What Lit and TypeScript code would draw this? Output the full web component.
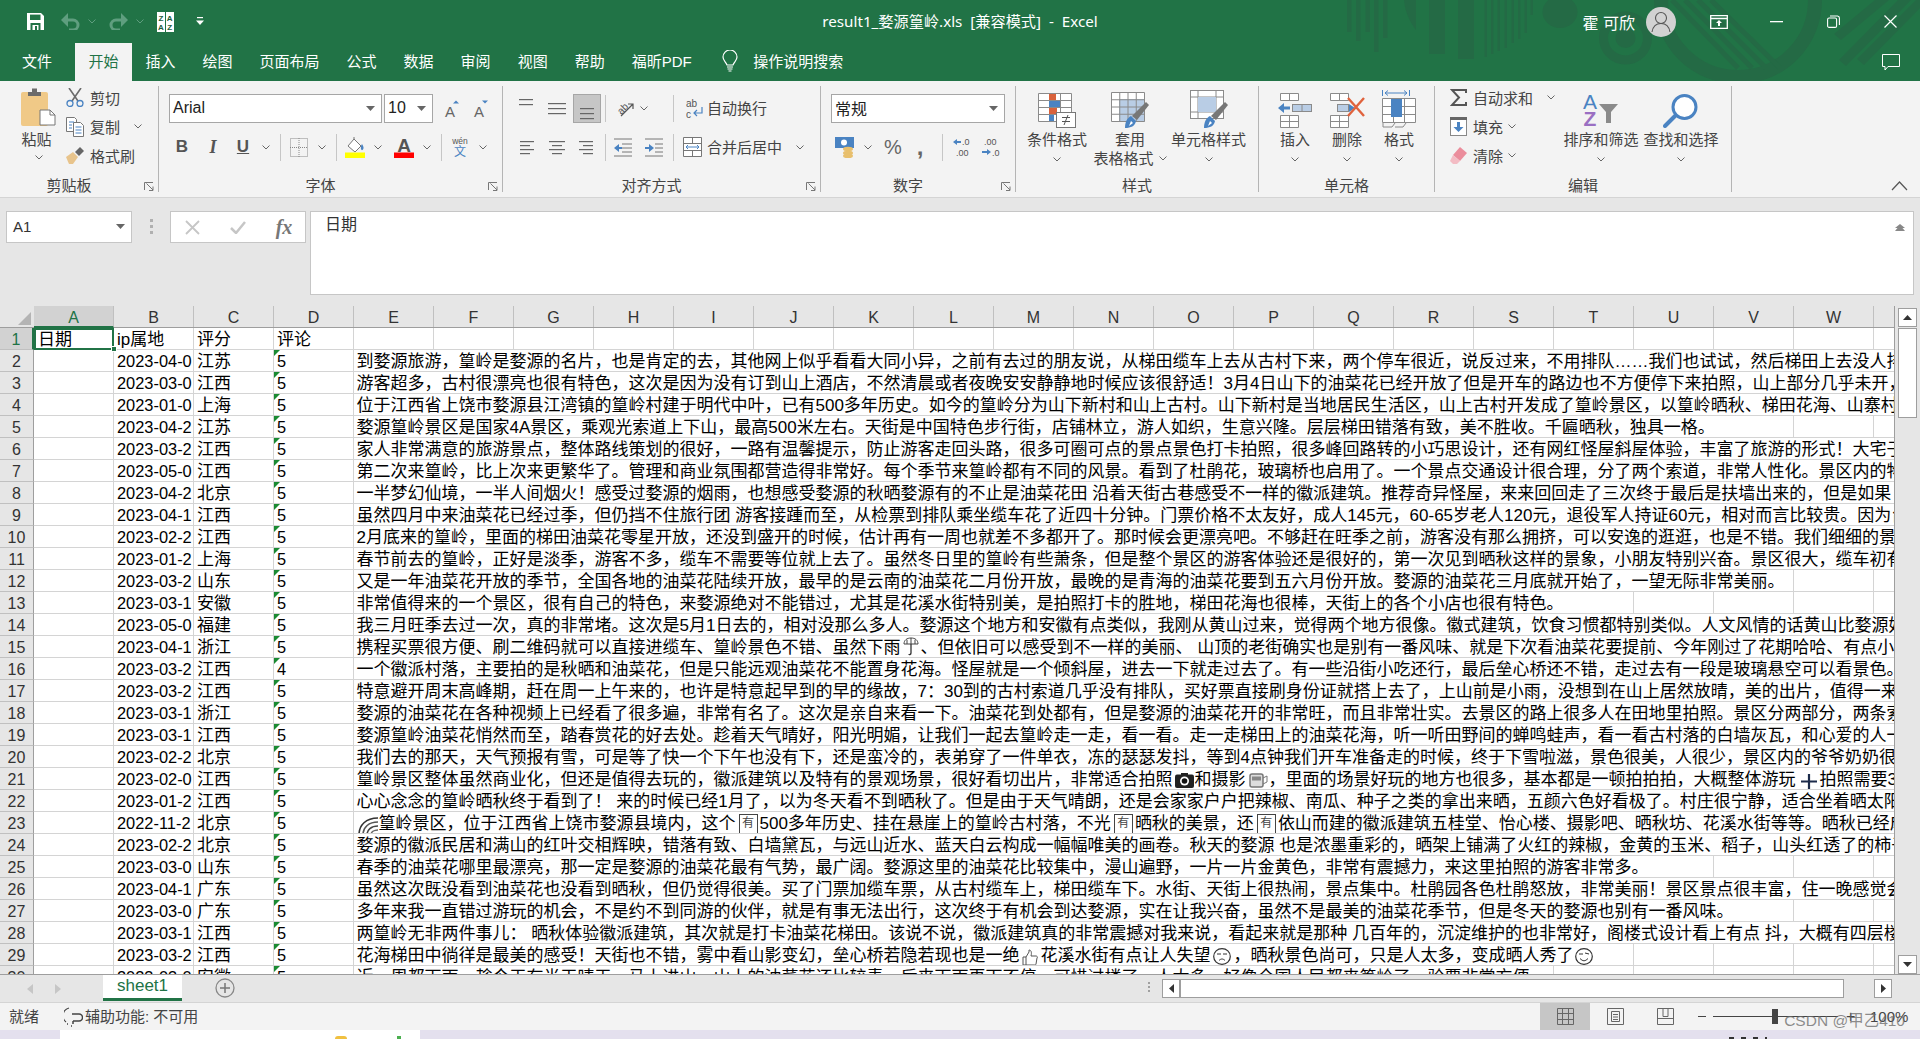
import { LitElement, html, css, svg, TemplateResult } from "lit";
import { customElement } from "lit/decorators.js";

const chev = (c = "#666") => html`<svg class="ic" width="8" height="5" viewBox="0 0 8 5"><polyline points="0.5,0.5 4,4 7.5,0.5" fill="none" stroke="${c}" stroke-width="1"/></svg>`;
const tri = html`<svg class="ic" width="9" height="5" viewBox="0 0 9 5"><path d="M0 0h9L4.5 5z" fill="#666"/></svg>`;
const launcher = html`<svg class="launch" width="10" height="9" viewBox="0 0 10 9"><path d="M.5 8V.5H9M2.5 1.5L9 8M9 4.5V8.5H5" fill="none" stroke="#777"/></svg>`;
const L = (w: number, h: number, ls: number[][], col = "#666") => html`<svg class="ic" width="${w}" height="${h}" viewBox="0 0 ${w} ${h}">${ls.map(l => svg`<rect x="${l[0]}" y="${l[2]}" width="${l[1] - l[0]}" height="1.2" fill="${col}"/>`)}</svg>`;

const saveI = html`<svg class="ic" width="17" height="17" viewBox="0 0 17 17"><path d="M0 0h14l3 3v14H0z" fill="#fff"/><rect x="3" y="1.6" width="10.5" height="5.4" fill="#217346"/><rect x="3.5" y="10" width="10" height="7" fill="#217346"/><rect x="5.5" y="12" width="6" height="5" fill="#fff"/><rect x="8" y="13" width="2" height="4" fill="#217346"/></svg>`;
const undoI = html`<svg class="ic" width="19" height="17" viewBox="0 0 19 17"><path d="M3 7h9a5 5 0 0 1 0 10H8" fill="none" stroke="#5f9e7f" stroke-width="3"/><path d="M0 7l7-7v14z" fill="#5f9e7f"/></svg>`;
const redoI = html`<svg class="ic" width="19" height="17" viewBox="0 0 19 17"><path d="M16 7H7a5 5 0 0 0 0 10h4" fill="none" stroke="#5f9e7f" stroke-width="3"/><path d="M19 7l-7-7v14z" fill="#5f9e7f"/></svg>`;
const sortQ = html`<svg class="ic" width="17" height="20" viewBox="0 0 17 20"><rect width="17" height="20" fill="#fff"/><rect x="8" width="1" height="20" fill="#217346"/><text x="4" y="9" font-size="8" font-family="Liberation Sans" font-weight="700" text-anchor="middle" fill="#1d5c3a">Z</text><text x="12.7" y="9" font-size="8" font-family="Liberation Sans" font-weight="700" text-anchor="middle" fill="#1d5c3a">A</text><text x="4" y="18" font-size="8" font-family="Liberation Sans" font-weight="700" text-anchor="middle" fill="#1d5c3a">A</text><text x="12.7" y="18" font-size="8" font-family="Liberation Sans" font-weight="700" text-anchor="middle" fill="#1d5c3a">Z</text></svg>`;
const qatDrop = html`<svg class="ic" width="8" height="9" viewBox="0 0 8 9"><rect x="1" y="0" width="6" height="1.2" fill="#fff"/><path d="M0 3.5h8L4 8z" fill="#fff"/></svg>`;
const person = html`<svg class="avatar" width="30" height="30" viewBox="0 0 30 30"><circle cx="15" cy="15" r="15" fill="#d2d2d2"/><circle cx="15" cy="11" r="5.5" fill="none" stroke="#555" stroke-width="1.1"/><path d="M6 25c1-6 5-8.5 9-8.5s8 2.5 9 8.5" fill="none" stroke="#555" stroke-width="1.1"/></svg>`;
const ribDisp = html`<svg class="ic" width="18" height="14" viewBox="0 0 18 14"><path d="M.7.7h16.6v12.6H.7zM.7 3.5h16.6" fill="none" stroke="#fff" stroke-width="1.3"/><path d="M9 5l3 3h-2v3H8V8H6z" fill="#fff"/></svg>`;
const minI = html`<svg class="ic" width="13" height="2" viewBox="0 0 13 2"><rect width="13" height="1.3" fill="#fff"/></svg>`;
const restI = html`<svg class="ic" width="13" height="13" viewBox="0 0 13 13"><rect x=".6" y="3" width="9" height="9.4" rx="1.5" fill="none" stroke="#fff" stroke-width="1.1"/><path d="M3 1h7.5A2 2 0 0 1 12.4 3v7" fill="none" stroke="#fff" stroke-width="1.1"/></svg>`;
const closeI = html`<svg class="ic" width="13" height="13" viewBox="0 0 13 13"><path d="M.5.5l12 12M12.5.5l-12 12" stroke="#fff" stroke-width="1.2"/></svg>`;
const bulb = html`<svg class="ic" width="16" height="22" viewBox="0 0 16 22"><path d="M5 15C4 12 1 10.500 1 7a7 7 0 0 1 14 0c0 3.500-3 5-4 8z" fill="none" stroke="#fff" stroke-width="1.2"/><path d="M5 17h6M5.500 19h5M6.500 21h3" stroke="#fff" stroke-width="1.2"/></svg>`;
const comment = html`<svg class="ic" width="18" height="17" viewBox="0 0 18 17"><path d="M.5.500h17v12H6L3 16v-3.500H.5z" fill="none" stroke="#fff"/></svg>`;

const paste = html`<svg class="ic" width="35" height="39" viewBox="0 0 35 39"><rect x="0" y="5" width="27" height="34" rx="2" fill="#f0c987"/><path d="M7 5h4V1.500h5V5h4v4H7z" fill="#6b6b6b"/><path d="M19 23h10l5 5v10H19z" fill="#fff" stroke="#777"/><path d="M29 23v5h5" fill="none" stroke="#777"/></svg>`;
const cut = html`<svg class="ic" width="18" height="19" viewBox="0 0 18 19"><path d="M3 0l9 13M15 0L6 13" stroke="#6b6b6b" stroke-width="1.600"/><circle cx="4" cy="15.500" r="3" fill="none" stroke="#4a83c2" stroke-width="1.300"/><circle cx="14" cy="15.500" r="3" fill="none" stroke="#4a83c2" stroke-width="1.300"/></svg>`;
const copy = html`<svg class="ic" width="18" height="20" viewBox="0 0 18 20"><path d="M.5.500h8l2 2v12H.5z" fill="#fff" stroke="#777"/><path d="M7.500 5.500h7l3 3v11h-10z" fill="#fff" stroke="#777"/><path d="M3 5h5M3 8h3M3 11h3M9.500 10h6M9.500 13h6M9.500 16h6" stroke="#4a83c2"/></svg>`;
const painter = html`<svg class="ic" width="18" height="17" viewBox="0 0 18 17"><path d="M0 10l7-5 5 5-5 7H3z" fill="#e8c48c"/><path d="M9 5l5-5 4 4-5 5z" fill="#666"/></svg>`;
const grow = (up: boolean) => html`<svg class="ic" width="16" height="18" viewBox="0 0 16 18"><text x="6" y="17" font-size="15" font-family="Liberation Sans" text-anchor="middle" fill="#666">A</text><path d="${up ? "M9 3.500l3-3 3 3z" : "M9 .5l3 3 3-3z"}" fill="#4a83c2"/></svg>`;
const borders = html`<svg class="ic" width="18" height="19" viewBox="0 0 18 19"><rect x=".5" y=".5" width="17" height="18" fill="none" stroke="#888" stroke-dasharray="1 1"/><path d="M9 0v19M0 9.500h18" stroke="#888" stroke-dasharray="1 1"/></svg>`;
const fillI = html`<svg class="ic" width="20" height="21" viewBox="0 0 20 21"><path d="M3 9l6-7 7 7-6 6z" fill="#fff" stroke="#777"/><path d="M9 2v-2" stroke="#777"/><path d="M17 7c2 3 2 5 .5 6S15 10 17 7z" fill="#4a83c2"/><rect y="15.500" width="20" height="5.500" fill="#ff0"/></svg>`;
const colorA = html`<svg class="ic" width="20" height="21" viewBox="0 0 20 21"><text x="10" y="14.500" font-size="19" font-family="Liberation Sans" font-weight="700" text-anchor="middle" fill="#555">A</text><rect y="15.500" width="20" height="5.500" fill="#f00"/></svg>`;
const wen = html`<svg class="ic" width="18" height="20" viewBox="0 0 18 20"><text x="9" y="7" font-size="8.500" font-family="Liberation Sans" text-anchor="middle" fill="#555">wén</text><text x="9" y="19" font-size="12" font-family="Noto Sans CJK SC" text-anchor="middle" fill="#4a83c2">文</text></svg>`;

const orient = html`<svg class="ic" width="19" height="19" viewBox="0 0 19 19"><text x="8" y="13" font-size="10" font-family="Liberation Sans" transform="rotate(-45 8 10)" text-anchor="middle" fill="#555">ab</text><path d="M6 17L18 5M13 5h5v5" fill="none" stroke="#555" stroke-width="1.200"/></svg>`;
const wrap = html`<svg class="ic" width="17" height="20" viewBox="0 0 17 20"><text x="0" y="8" font-size="10" font-family="Liberation Sans" fill="#555">ab</text><text x="0" y="19" font-size="10" font-family="Liberation Sans" fill="#555">c</text><path d="M16 8v6h-8M11 11l-3 3 3 3" fill="none" stroke="#4a83c2" stroke-width="1.200"/></svg>`;
const indentL = html`<svg class="ic" width="18" height="19" viewBox="0 0 18 19"><path d="M0 1h18M8 6h10M8 10h10M8 14h10M0 18h18" stroke="#777"/><path d="M0 10l5-4v3h3v2H5v3z" fill="#4a83c2"/></svg>`;
const indentR = html`<svg class="ic" width="18" height="19" viewBox="0 0 18 19"><path d="M0 1h18M10 6h8M10 10h8M10 14h8M0 18h18" stroke="#777"/><path d="M9 10L4 6v3H0v2h4v3z" fill="#4a83c2"/></svg>`;
const merge = html`<svg class="ic" width="19" height="20" viewBox="0 0 19 20"><path d="M.5.500h18v19H.5zM.5 6.500h18M.5 13.500h18M9.500.5v6M9.500 13.500v6" fill="#fff" stroke="#777"/><rect x="1" y="7" width="17" height="6" fill="#fff"/><path d="M3 10h13M5 8l-2 2 2 2M14 8l2 2-2 2" fill="none" stroke="#4a83c2"/></svg>`;
const acct = html`<svg class="ic" width="20" height="21" viewBox="0 0 20 21"><rect y="0" width="19" height="11" fill="#4a83c2"/><circle cx="9" cy="5.500" r="3" fill="#fff"/><ellipse cx="13" cy="12" rx="5" ry="2.200" fill="#e8bf6c"/><ellipse cx="13" cy="16" rx="5" ry="2.200" fill="#e8bf6c"/><ellipse cx="13" cy="19" rx="5" ry="2.200" fill="#e8bf6c"/></svg>`;
const decInc = html`<svg class="ic" width="20" height="20" viewBox="0 0 20 20"><path d="M0 5l4-3v2h4v2H4v2z" fill="#4a83c2"/><text x="9" y="8" font-size="9" font-family="Liberation Sans" fill="#555">.0</text><text x="3" y="19" font-size="9" font-family="Liberation Sans" fill="#555">.00</text></svg>`;
const decDec = html`<svg class="ic" width="20" height="20" viewBox="0 0 20 20"><text x="3" y="8" font-size="9" font-family="Liberation Sans" fill="#555">.00</text><path d="M1 14h5v-2l4 3-4 3v-2H1z" fill="#4a83c2"/><text x="11" y="19" font-size="9" font-family="Liberation Sans" fill="#555">.0</text></svg>`;

const gridLines = (x: number, y: number, w: number, h: number, cx: number, cy: number) => {
  const out = [];
  for (let i = 0; i <= cx; i++) out.push(svg`<path d="M${x + (w * i) / cx} ${y}v${h}" stroke="#8a8a8a"/>`);
  for (let i = 0; i <= cy; i++) out.push(svg`<path d="M${x} ${y + (h * i) / cy}h${w}" stroke="#8a8a8a"/>`);
  return out;
};
const condI = html`<svg class="ic" width="38" height="35" viewBox="0 0 38 35"><rect x=".5" y=".5" width="33" height="28" fill="#fff"/>${gridLines(0.5, 0.5, 33, 28, 3, 4)}<rect x="11" y="1" width="7" height="6" fill="#d9623c"/><rect x="11" y="8" width="11" height="6" fill="#4a83c2"/><rect x="11" y="15" width="8" height="6" fill="#d9623c"/><rect x="11" y="22" width="5" height="6" fill="#4a83c2"/><rect x="18.500" y="19.500" width="19" height="15" fill="#fff" stroke="#777"/><path d="M24 24.500h8M24 28.500h8M30 22l-4 10" stroke="#555"/></svg>`;
const brush = (dx: number, dy: number) => svg`<path transform="translate(${dx} ${dy})" d="M30 0l3 3-12 15-5-4z" fill="#777"/><path transform="translate(${dx} ${dy})" d="M15 14l5 5c-1 5-5 7-11 7 0-6 2-10 6-12z" fill="#4a83c2"/><path transform="translate(${dx} ${dy})" d="M15 19l2 2-4 3z" fill="#fff"/>`;
const tableI = html`<svg class="ic" width="38" height="36" viewBox="0 0 38 36"><rect x=".5" y=".5" width="33" height="29" fill="#fff"/><rect x="8" y="7" width="26" height="23" fill="#b9cde5"/>${gridLines(0.5, 0.5, 33, 29, 4, 4)}${brush(5, 10)}</svg>`;
const cellStyleI = html`<svg class="ic" width="38" height="38" viewBox="0 0 38 38"><rect x=".5" y=".5" width="33" height="28" fill="#fff" stroke="#8a8a8a"/><path d="M8 .5v28M26 .5v28M.5 7h33M.5 22h33" stroke="#8a8a8a"/><rect x="8" y="7" width="18" height="15" fill="#b9cde5"/>${brush(5, 12)}</svg>`;
const insI = html`<svg class="ic" width="34" height="35" viewBox="0 0 34 35"><path d="M2.500.5h18v7h-18zM11.500.5v7M2.500 22.500h18v12h-18zM2.500 28.500h18M11.500 22.500v12" fill="#fff" stroke="#8a8a8a"/><rect x="14.500" y="11.500" width="19" height="7" fill="#b9cde5" stroke="#8a8a8a"/><path d="M24 11.500v7" stroke="#8a8a8a"/><path d="M0 15l6-5v3.500h6v3H6V20z" fill="#4a83c2"/></svg>`;
const delI = html`<svg class="ic" width="35" height="35" viewBox="0 0 35 35"><path d="M.5.500h18v7H.5zM9.500.5v7M.5 22.500h18v12H.5zM.5 28.500h18M9.500 22.500v12" fill="#fff" stroke="#8a8a8a"/><rect x="7.500" y="11.500" width="11" height="7" fill="#b9cde5" stroke="#8a8a8a"/><path d="M19 11l6 4-6 4z" fill="#4a83c2"/><path d="M18 5l16 18M34 5L18 23" stroke="#e0623c" stroke-width="2.400"/></svg>`;
const fmtI = html`<svg class="ic" width="34" height="38" viewBox="0 0 34 38"><path d="M.5 0v6M27.500 0v6M3 3h22M6 .5L3 3l3 2.500M22 .5L25 3l-3 2.500" fill="none" stroke="#4a83c2"/><rect x=".5" y="8.500" width="33" height="24" fill="#fff"/>${gridLines(0.5, 8.5, 33, 24, 3, 3)}<rect x="9" y="9" width="11" height="18" fill="#4a83c2"/><path d="M1 33v4h9l3-4M13 37h8l3-4" fill="none" stroke="#8a8a8a"/></svg>`;
const sigma = html`<svg class="ic" width="17" height="17" viewBox="0 0 17 17"><path d="M16 4V1H2l7 7.500L2 16h14v-3" fill="none" stroke="#555" stroke-width="2"/></svg>`;
const fillDown = html`<svg class="ic" width="17" height="19" viewBox="0 0 17 19"><rect x=".5" y=".5" width="16" height="18" fill="#fff" stroke="#888"/><rect width="17" height="3" fill="#666"/><path d="M8.500 15l-5-5h3.500V5h3v5h3.500z" fill="#4a83c2"/></svg>`;
const eraser = html`<svg class="ic" width="17" height="17" viewBox="0 0 17 17"><path d="M10 0l7 6-7 8-7-6z" fill="#eb8d9c"/><path d="M3 8l7 6-3 3H3l-3-3z" fill="#f3bcc4"/></svg>`;
const sortI = html`<svg class="ic" width="37" height="35" viewBox="0 0 37 35"><text x="7" y="16" font-size="21" font-family="Liberation Sans" text-anchor="middle" fill="#4a83c2">A</text><text x="7" y="33" font-size="21" font-family="Liberation Sans" font-weight="700" text-anchor="middle" fill="#9a6fc2">Z</text><path d="M16 11h19l-7 8v11h-5V19z" fill="#8a8a8a"/></svg>`;
const findI = html`<svg class="ic" width="36" height="34" viewBox="0 0 36 34"><circle cx="21.500" cy="13" r="11.500" fill="#fff" stroke="#4a83c2" stroke-width="3"/><path d="M12 22L2 32" stroke="#4a83c2" stroke-width="4" stroke-linecap="round"/></svg>`;
const collapse = html`<svg class="ic" width="17" height="10" viewBox="0 0 17 10"><polyline points="1,9 8.500,1 16,9" fill="none" stroke="#555" stroke-width="1.200"/></svg>`;

const xI = html`<svg class="ic" width="15" height="15" viewBox="0 0 15 15"><path d="M1 1l13 13M14 1L1 14" stroke="#c6c6c6" stroke-width="1.800"/></svg>`;
const checkI = html`<svg class="ic" width="16" height="13" viewBox="0 0 16 13"><path d="M1 7l5 5 9-11" fill="none" stroke="#c6c6c6" stroke-width="2.500"/></svg>`;
const triUp = html`<svg class="ic" width="10" height="7" viewBox="0 0 10 7"><path d="M0 7l5-6 5 6M0 4l5-4 5 4" fill="#888"/></svg>`;

const E = {
  umb: html`<svg class="emo e-umb" width="20" height="19" viewBox="0 0 20 19"><path d="M3 7c0-4 3-6 7-6s7 2 7 6z" fill="none" stroke="#444"/><path d="M6 3v4M10 1v6M14 3v4" stroke="#444"/><path d="M10 7v9c0 2-2 2-2 1" fill="none" stroke="#333" stroke-width="1.300"/></svg>`,
  cam: html`<svg class="emo e-cam" width="19" height="15" viewBox="0 0 19 15"><rect y="1.500" width="19" height="13.500" rx="2" fill="#222"/><rect x="6" y="0" width="7" height="3" fill="#222"/><circle cx="9.500" cy="8" r="4.500" fill="#fff"/><circle cx="9.500" cy="8" r="2.800" fill="#111"/></svg>`,
  vid: html`<svg class="emo e-vid" width="19" height="15" viewBox="0 0 19 15"><rect x="1" y="1" width="13" height="13" rx="2" fill="#ddd" stroke="#777" stroke-width="1.500"/><rect x="3" y="3.500" width="9" height="4" fill="#888"/><path d="M14 5l4-2v6l-4 2" fill="none" stroke="#777"/></svg>`,
  plus: html`<svg class="emo e-plus" width="16" height="15" viewBox="0 0 16 15"><path d="M8 0v15M0 7.500h16" stroke="#1c2b4a" stroke-width="2.200"/></svg>`,
  rain: html`<svg class="emo e-rain" width="22" height="18" viewBox="0 0 22 18"><path d="M2 18C2 8 9 1 21 1" fill="none" stroke="#333" stroke-width="1.600"/><path d="M6 18C6 10 12 5 21 5" fill="none" stroke="#555" stroke-width="1.600"/><path d="M10 18c0-5 4-9 11-9" fill="none" stroke="#444" stroke-width="1.600"/><path d="M14 18c0-3 3-5 7-5" fill="none" stroke="#666" stroke-width="1.600"/></svg>`,
  thumb: html`<svg class="emo e-thumb" width="17" height="17" viewBox="0 0 17 17"><path d="M2 8h3v8H2zM5 8l3-5V1c2 0 3 2 2 6h5c1 0 2 1 1 2l-1 6c0 1-1 1-2 1H5" fill="#fff" stroke="#555"/></svg>`,
  sad: html`<svg class="emo e-sad" width="18" height="17" viewBox="0 0 18 17"><ellipse cx="9" cy="8.500" rx="8.300" ry="7.900" fill="#fff" stroke="#333" stroke-width="1.200"/><path d="M4 6h4M10 6h4" stroke="#333"/><path d="M6 12.500c2-2 4-2 6 0" fill="none" stroke="#333"/></svg>`,
  smile: html`<svg class="emo e-smile" width="18" height="17" viewBox="0 0 18 17"><ellipse cx="9" cy="8.500" rx="8.300" ry="7.900" fill="#fff" stroke="#333" stroke-width="1.200"/><path d="M4 6h4M10 5l4 1" stroke="#333"/><path d="M5 10.500c3 3 5 3 8 0" fill="none" stroke="#333"/></svg>`,
  you: html`<span class="boxed">有</span>`,
};

type Row = [string, string, string, string | TemplateResult];
const rows: Row[] = [
  ["2023-04-0", "江苏", "5", "到婺源旅游，篁岭是婺源的名片，也是肯定的去，其他网上似乎看看大同小异，之前有去过的朋友说，从梯田缆车上去从古村下来，两个停车很近，说反过来，不用排队……我们也试试，然后梯田上去没人排"],
  ["2023-03-0", "江西", "5", "游客超多，古村很漂亮也很有特色，这次是因为没有订到山上酒店，不然清晨或者夜晚安安静静地时候应该很舒适！3月4日山下的油菜花已经开放了但是开车的路边也不方便停下来拍照，山上部分几乎未开，"],
  ["2023-01-0", "上海", "5", "位于江西省上饶市婺源县江湾镇的篁岭村建于明代中叶，已有500多年历史。如今的篁岭分为山下新村和山上古村。山下新村是当地居民生活区，山上古村开发成了篁岭景区，以篁岭晒秋、梯田花海、山寨村"],
  ["2023-04-2", "江苏", "5", "婺源篁岭景区是国家4A景区，乘观光索道上下山，最高500米左右。天街是中国特色步行街，店铺林立，游人如织，生意兴隆。层层梯田错落有致，美不胜收。千匾晒秋，独具一格。"],
  ["2023-03-2", "江西", "5", "家人非常满意的旅游景点，整体路线策划的很好，一路有温馨提示，防止游客走回头路，很多可圈可点的景点景色打卡拍照，很多峰回路转的小巧思设计，还有网红怪屋斜屋体验，丰富了旅游的形式！大宅子"],
  ["2023-05-0", "江西", "5", "第二次来篁岭，比上次来更繁华了。管理和商业氛围都营造得非常好。每个季节来篁岭都有不同的风景。看到了杜鹃花，玻璃桥也启用了。一个景点交通设计很合理，分了两个索道，非常人性化。景区内的物"],
  ["2023-04-2", "北京", "5", "一半梦幻仙境，一半人间烟火！感受过婺源的烟雨，也想感受婺源的秋晒婺源有的不止是油菜花田 沿着天街古巷感受不一样的徽派建筑。推荐奇异怪屋，来来回回走了三次终于最后是扶墙出来的，但是如果"],
  ["2023-04-1", "江西", "5", "虽然四月中来油菜花已经过季，但仍挡不住旅行团 游客接踵而至，从检票到排队乘坐缆车花了近四十分钟。门票价格不太友好，成人145元，60-65岁老人120元，退役军人持证60元，相对而言比较贵。因为台"],
  ["2023-02-2", "江西", "5", "2月底来的篁岭，里面的梯田油菜花零星开放，还没到盛开的时候，估计再有一周也就差不多都开了。那时候会更漂亮吧。不够赶在旺季之前，游客没有那么拥挤，可以安逸的逛逛，也是不错。我们细细的景"],
  ["2023-01-2", "上海", "5", "春节前去的篁岭，正好是淡季，游客不多，缆车不需要等位就上去了。虽然冬日里的篁岭有些萧条，但是整个景区的游客体验还是很好的，第一次见到晒秋这样的景象，小朋友特别兴奋。景区很大，缆车初有"],
  ["2023-03-2", "山东", "5", "又是一年油菜花开放的季节，全国各地的油菜花陆续开放，最早的是云南的油菜花二月份开放，最晚的是青海的油菜花要到五六月份开放。婺源的油菜花三月底就开始了，一望无际非常美丽。"],
  ["2023-03-1", "安徽", "5", "非常值得来的一个景区，很有自己的特色，来婺源绝对不能错过，尤其是花溪水街特别美，是拍照打卡的胜地，梯田花海也很棒，天街上的各个小店也很有特色。"],
  ["2023-05-0", "福建", "5", "我三月旺季去过一次，真的非常堵。这次是5月1日去的，相对没那么多人。婺源这个地方和安徽有点类似，我刚从黄山过来，觉得两个地方很像。徽式建筑，饮食习惯都特别类似。人文风情的话黄山比婺源好"],
  ["2023-04-1", "浙江", "5", html`携程买票很方便、刷二维码就可以直接进缆车、篁岭景色不错、虽然下雨${E.umb}、但依旧可以感受到不一样的美丽、 山顶的老街确实也是别有一番风味、就是下次看油菜花要提前、今年刚过了花期哈哈、有点小`],
  ["2023-03-2", "江西", "4", "一个徽派村落，主要拍的是秋晒和油菜花，但是只能远观油菜花不能置身花海。怪屋就是一个倾斜屋，进去一下就走过去了。有一些沿街小吃还行，最后垒心桥还不错，走过去有一段是玻璃悬空可以看景色。"],
  ["2023-03-2", "江西", "5", "特意避开周末高峰期，赶在周一上午来的，也许是特意起早到的早的缘故，7：30到的古村索道几乎没有排队，买好票直接刷身份证就搭上去了，上山前是小雨，没想到在山上居然放晴，美的出片，值得一来"],
  ["2023-03-1", "浙江", "5", "婺源的油菜花在各种视频上已经看了很多遍，非常有名了。这次是亲自来看一下。油菜花到处都有，但是婺源的油菜花开的非常旺，而且非常壮实。去景区的路上很多人在田地里拍照。景区分两部分，两条索"],
  ["2023-03-1", "江西", "5", "婺源篁岭油菜花悄然而至，踏春赏花的好去处。趁着天气晴好，阳光明媚，让我们一起去篁岭走一走，看一看。走一走梯田上的油菜花海，听一听田野间的蝉鸣蛙声，看一看古村落的白墙灰瓦，和心爱的人一"],
  ["2023-02-2", "北京", "5", "我们去的那天，天气预报有雪，可是等了快一个下午也没有下，还是蛮冷的，表弟穿了一件单衣，冻的瑟瑟发抖，等到4点钟我们开车准备走的时候，终于下雪啦滋，景色很美，人很少，景区内的爷爷奶奶很"],
  ["2023-02-0", "江西", "5", html`篁岭景区整体虽然商业化，但还是值得去玩的，徽派建筑以及特有的景观场景，很好看切出片，非常适合拍照${E.cam}和摄影${E.vid}，里面的场景好玩的地方也很多，基本都是一顿拍拍拍，大概整体游玩${E.plus}拍照需要3`],
  ["2023-01-2", "江西", "5", "心心念念的篁岭晒秋终于看到了！ 来的时候已经1月了，以为冬天看不到晒秋了。但是由于天气晴朗，还是会家家户户把辣椒、南瓜、种子之类的拿出来晒，五颜六色好看极了。村庄很宁静，适合坐着晒太阳"],
  ["2022-11-2", "北京", "5", html`${E.rain}篁岭景区，位于江西省上饶市婺源县境内，这个${E.you}500多年历史、挂在悬崖上的篁岭古村落，不光${E.you}晒秋的美景，还${E.you}依山而建的徽派建筑五桂堂、怡心楼、摄影吧、晒秋坊、花溪水街等等。晒秋已经成`],
  ["2023-02-2", "北京", "5", "婺源的徽派民居和满山的红叶交相辉映，错落有致、白墙黛瓦，与远山近水、蓝天白云构成一幅幅唯美的画卷。秋天的婺源 也是浓墨重彩的，晒架上铺满了火红的辣椒，金黄的玉米、稻子，山头红透了的柿子"],
  ["2023-03-0", "山东", "5", "春季的油菜花哪里最漂亮，那一定是婺源的油菜花最有气势，最广阔。婺源这里的油菜花比较集中，漫山遍野，一片一片金黄色，非常有震撼力，来这里拍照的游客非常多。"],
  ["2023-04-1", "广东", "5", "虽然这次既没看到油菜花也没看到晒秋，但仍觉得很美。买了门票加缆车票，从古村缆车上，梯田缆车下。水街、天街上很热闹，景点集中。杜鹃园各色杜鹃怒放，非常美丽！景区景点很丰富，住一晚感觉会"],
  ["2023-03-0", "广东", "5", "多年来我一直错过游玩的机会，不是约不到同游的伙伴，就是有事无法出行，这次终于有机会到达婺源，实在让我兴奋，虽然不是最美的油菜花季节，但是冬天的婺源也别有一番风味。"],
  ["2023-03-1", "江西", "5", "两篁岭无非两件事儿： 晒秋体验徽派建筑，其次就是打卡油菜花梯田。该说不说，徽派建筑真的非常震撼对我来说，看起来就是那种 几百年的，沉淀维护的也非常好，阁楼式设计看上有点 抖，大概有四层楼"],
  ["2023-03-2", "江西", "5", html`花海梯田中徜徉是最美的感受！天街也不错，雾中看山影变幻，垒心桥若隐若现也是一绝${E.thumb}花溪水街有点让人失望${E.sad}，晒秋景色尚可，只是人太多，变成晒人秀了${E.smile}`],
  ["2023-03-0", "安徽", "5", "近一周都下雨，趁今天有半天晴天，马上进山。山上的油菜花还比较青，后来下雨再下不停，可惜过楼了，人太多，好像全国人民都来篁岭了，验票非常方便"],
];
const cols = "ABCDEFGHIJKLMNOPQRSTUVWX".split("");

@customElement("app-root")
export class AppRoot extends LitElement {
  static styles = css`
    :host { display:block; width:1920px; height:1039px; overflow:hidden; position:relative; background:#e6e6e6;
      font-family:"Liberation Sans","Noto Sans CJK SC",sans-serif; color:#444; font-size:15px; }
    .ic { display:block; flex:none; }

    /* Title */
    .top { background:#217346; height:81px; position:relative; color:#fff; }
    .pattern { position:absolute; left:1320px; top:0; }
    .titlebar { position:relative; height:43px; display:grid; grid-template-columns:1fr auto 1fr; align-items:center; }
    .qat { display:flex; align-items:center; padding-left:27px; }
    .q-undo { margin-left:17px; } .q-ch { margin-left:8px; } .q-redo { margin-left:13px; } .q-sort { margin-left:13px; } .q-drop { margin-left:22px; }
    .title { white-space:pre; font-family:"Noto Sans","Noto Sans CJK SC",sans-serif; font-size:15.2px; padding-bottom:4px; }
    .win { display:flex; align-items:center; justify-content:flex-end; padding-right:23px; }
    .user { font-size:16px; margin-right:11px; white-space:pre; }
    .avatar { display:block; }
    .w-rib { margin-left:34px; } .w-min { margin-left:42px; } .w-res { margin-left:44px; } .w-cls { margin-left:44px; }
    .tabs { position:relative; height:38px; display:flex; align-items:center; }
    .tab { height:38px; padding:0 13.5px 3px; box-sizing:border-box; display:flex; align-items:center; white-space:nowrap; }
    .tab.file { padding:0 23px 3px 22px; }
    .tab.on { background:#f3f3f3; color:#217346; }
    .tab.tell { padding:0 0 3px; margin-left:17px; gap:15px; }
    .cmt { margin-left:auto; margin-right:20px; }

    /* Ribbon */
    .ribbon { height:116px; background:#f3f3f3; border-bottom:1px solid #d4d4d4; box-sizing:content-box; display:flex; white-space:nowrap; }
    .group { position:relative; flex:none; display:flex; flex-direction:column; height:116px; }
    .sep { flex:none; width:1px; height:106px; margin-top:5px; background:#b4b4b4; }
    .body { height:95px; box-sizing:border-box; }
    .glabel { height:21px; line-height:19px; text-align:center; font-size:15px; }
    .glabel.l { padding-right:20px; }
    .launch { position:absolute; right:4px; bottom:6px; }
    .g-clip { width:158px; } .g-font { width:343px; } .g-align { width:317px; } .g-num { width:194px; }
    .g-style { width:242px; } .g-cell { width:175px; } .g-edit { width:296px; }
    .g-rest { flex:1; display:flex; justify-content:flex-end; align-items:flex-end; padding:0 12px 6px 0; }
    .cb { display:flex; padding:3px 0 0 21px; }
    .paste { width:35px; display:flex; flex-direction:column; align-items:center; padding-top:3px; }
    .paste .t { margin-top:4px; line-height:19px; width:30px; margin-right:4px; } .paste .chev { margin-top:6px; }
    .smalls { margin-left:10px; }
    .srow { height:29px; box-sizing:border-box; padding-bottom:2px; display:flex; align-items:center; }
    .srow .slot { width:24px; flex:none; }
    .cc1 { margin-left:14px; } .cc2 { margin-left:5px; }
    .r1 { display:flex; align-items:center; height:29px; }
    .pt { padding-top:13px; }
    .sel { box-sizing:border-box; height:29px; background:#fff; border:1px solid #a6a6a6; display:flex; align-items:center; justify-content:space-between; padding:0 6px 2px 3px; font-size:16px; color:#222; }
    .sel .ic { margin-top:2px; }
    .f-name { margin-left:10px; width:213px; }
    .f-size { margin-left:2px; width:49px; }
    .f-up { margin-left:11px; } .f-dn { margin-left:13px; }
    .fr2 { display:grid; margin:10px 0 0 10px; height:28px; align-items:center; justify-items:center;
      grid-template-columns:26px 36px 24px 22px 6px 31px 16px 12px 26px 20px 32px 14px 14px 24px 22px; }
    .vs { width:1px; height:27px; background:#c6c6c6; }
    .bi { font-family:"Liberation Sans"; font-size:17px; color:#555; line-height:20px; }
    .bi.b { font-weight:700; } .bi.i { font-style:italic; font-family:"Liberation Serif"; font-weight:700; font-size:18px; }
    .bi.u { font-weight:700; text-decoration:underline; }
    .ar1 { display:grid; margin:13px 0 0 8px; height:29px; align-items:center; justify-items:center;
      grid-template-columns:30px 32px 28px 8px 30px 10px 20px 8px 6px 22px auto; }
    .ar2 { display:grid; margin:10px 0 0 8px; height:28px; align-items:center; justify-items:center;
      grid-template-columns:32px 28px 30px 8px 28px 34px 4px 34px 82px 18px; }
    .ar1 .t { justify-self:start; margin-left:2px; padding-bottom:2px; } .ar2 .t { justify-self:start; margin-left:-2px; padding-bottom:2px; }
    .active { background:#c6c6c6; border:1px solid #a6a6a6; box-sizing:border-box; height:29px; width:28px; display:flex; justify-content:center; }
    .n-sel { margin-left:10px; width:174px; }
    .nr2 { display:grid; margin:10px 0 0 10px; height:28px; align-items:center; justify-items:center;
      grid-template-columns:28px 18px 32px 22px 22px 20px 36px; }
    .pct { font-size:20px; color:#666; } .cma { font-size:24px; font-weight:700; color:#666; line-height:14px; }
    .larges { display:flex; padding-top:3px; }
    .lb { display:flex; flex-direction:column; align-items:center; flex:none; }
    .lic { height:44px; display:flex; align-items:flex-end; justify-content:center; width:100%; }
    .lb .t1 { margin-top:2px; line-height:19px; }
    .lb .t2 { line-height:19px; display:flex; align-items:center; gap:5px; }
    .lb .cv { height:20px; display:flex; align-items:center; }
    .s-l { padding-left:11px; } .w60 { width:60px; } .w76 { width:76px; margin-left:5px; } .w75 { width:75px; margin-left:3px; }
    .c-l { padding-left:10px; } .w52 { width:52px; }
    .ed { display:flex; padding:3px 0 0 15px; }
    .eds { width:111px; flex:none; }
    .eds .slot { width:23px; }
    .w80 { width:80px; }

    /* Formula bar */
    .fbar { height:108px; padding-top:13px; box-sizing:border-box; display:flex; align-items:flex-start; background:#e6e6e6; }
    .namebox { margin-left:6px; width:126px; height:32px; box-sizing:border-box; background:#fff; border:1px solid #c6c6c6; display:flex; align-items:center; justify-content:space-between; padding:0 6px 2px; font-size:15px; color:#333; }
    .dots { width:38px; display:flex; flex-direction:column; align-items:center; gap:3px; padding-top:8px; }
    .dots i { width:3px; height:3px; background:#b0b0b0; display:block; }
    .fbtns { width:136px; height:32px; box-sizing:border-box; background:#fff; border:1px solid #c6c6c6; display:grid; grid-template-columns:42px 50px 42px; align-items:center; justify-items:center; }
    .fx { font-family:"Liberation Serif"; font-style:italic; font-size:20px; color:#777; font-weight:700; }
    .finput { margin-left:4px; width:1604px; height:84px; box-sizing:border-box; background:#fff; border:1px solid #c6c6c6; display:flex; justify-content:space-between; padding:2px 8px 0 14px; font-size:16px; color:#333; line-height:22px; }
    .finput .ic { margin-top:10px; }

    /* Sheet */
    .sheet { height:668px; display:flex; overflow:hidden; }
    .grid { width:1895px; flex:none; box-sizing:border-box; overflow:hidden; border-right:1px solid #9e9e9e; }
    .colh { height:21px; display:flex; background:#e6e6e6; border-bottom:1px solid #9e9e9e; box-sizing:content-box; }
    .corner { width:34px; flex:none; box-sizing:border-box; display:flex; justify-content:flex-end; align-items:flex-end; padding:0 3px 2px 0; }
    .ch { width:80px; flex:none; box-sizing:border-box; border-right:1px solid #c0c0c0; text-align:center; line-height:23px; font-size:16px; color:#333; }
    .ch.sel2 { background:#d2d2d2; color:#217346; border-bottom:2px solid #217346; height:22px; }
    .row { height:22px; display:flex; background:#fff; box-sizing:border-box; border-bottom:1px solid #d4d4d4; }
    .rh { width:34px; flex:none; box-sizing:border-box; background:#e6e6e6; border-right:1px solid #9e9e9e; text-align:center; font-size:16px; line-height:23px; color:#333; height:22px; border-bottom:1px solid #c0c0c0; }
    .rh.sel2 { background:#d2d2d2; color:#217346; border-right:2px solid #217346; }
    .c { width:80px; flex:none; box-sizing:border-box; border-right:1px solid #d4d4d4; overflow:hidden; white-space:nowrap; line-height:23px; padding-left:3px; font-size:16.4px; color:#000; position:relative; height:21px; }
    .c.cn { font-size:17px; }
    .c.a1 { box-shadow:inset 0 0 0 2px #217346; height:22px; padding-left:4px; overflow:visible; z-index:2; background:transparent; border:none; }
    .handle { position:absolute; right:-3px; bottom:-2px; width:6px; height:6px; background:#217346; border:1px solid #fff; box-sizing:border-box; }
    .c.txtnum::before { content:""; position:absolute; left:0; top:0; border-top:6px solid #1a8a32; border-right:6px solid transparent; }
    .rest { flex:1; min-width:0; overflow:hidden; height:21px; background:repeating-linear-gradient(90deg, transparent 0 79px, #d4d4d4 79px 80px); }
    .txt { display:inline-block; background:#fff; white-space:nowrap; padding:0 2px 0 2.5px; font-size:17px; line-height:23px; height:21px; color:#000; overflow:hidden; }
    .emo { display:inline-block; vertical-align:top; margin-top:5px; }
    .e-umb { margin-top:1px; }
    .e-cam { margin-left:2px; margin-right:1px; }
    .e-vid { margin-left:3px; margin-right:1px; }
    .e-plus { margin-left:5px; margin-right:3px; margin-top:6px; }
    .e-rain { margin-left:0; }
    .e-thumb { margin-left:1px; margin-right:3px; }
    .e-sad { margin-left:2px; margin-right:3px; margin-top:4px; }
    .e-smile { margin-left:1px; margin-top:4px; }
    .boxed { display:inline-block; box-sizing:border-box; width:19px; height:20px; margin:2px 2px 0 3px; border:1.5px solid #444; background:#fff; text-align:center; font-size:12px; line-height:17px; vertical-align:top; color:#444; }
    .vscroll { flex:1; display:flex; flex-direction:column; justify-content:space-between; padding:2px 3px 0 3px; box-sizing:border-box; background:#e6e6e6; }
    .vtop { display:flex; flex-direction:column; gap:1px; }
    .sb { box-sizing:border-box; border:1px solid #9e9e9e; background:#fff; display:flex; align-items:center; justify-content:center; }
    .v-btn { height:19px; }
    .v-thumb { height:90px; }

    .tabbar { height:29px; box-sizing:border-box; display:flex; background:#e6e6e6; border-top:1px solid #9e9e9e; border-bottom:1px solid #d4d4d4; }
    .nav { width:103px; flex:none; display:flex; align-items:center; padding-left:27px; gap:22px; box-sizing:border-box; }
    .nav svg { display:block; }
    .sheet1 { width:79px; flex:none; height:26px; box-sizing:border-box; background:#fff; color:#217346; font-size:17px; text-align:center; line-height:22px; border-bottom:3px solid #217346; }
    .addb { margin:3px 0 0 33px; width:20px; height:20px; flex:none; }
    .vdots { margin-left:913px; display:flex; flex-direction:column; gap:2px; padding-top:7px; width:3px; }
    .vdots i { width:2px; height:2px; background:#a0a0a0; display:block; }
    .hs { margin:4px 0 0 11px; width:730px; height:19px; flex:none; display:flex; box-sizing:border-box; }
    .h-btn { width:18px; height:19px; flex:none; }
    .h-th { width:664px; height:19px; flex:none; }
    .h-tr { flex:1; }

    .status { height:27px; box-sizing:border-box; background:#f3f3f3; display:flex; align-items:center; font-size:15px; padding-left:9px; color:#444; position:relative; }
    .status > span { padding-bottom:2px; }
    .acc { margin-left:25px; margin-right:2px; }
    .st-r { margin-left:auto; display:flex; align-items:center; height:27px; }
    .vbtn { width:50px; height:27px; display:flex; align-items:center; justify-content:center; }
    .vbtn.on { background:#c6c6c6; }
    .zoomm { width:8px; height:1px; background:#444; margin-left:8px; }
    .zline { width:125px; height:1px; background:#444; margin-left:7px; position:relative; }
    .zh { position:absolute; left:59px; top:-7px; width:6px; height:15px; background:#444; }
    .zplus { margin-left:8px; font-size:16px; width:24px; }
    .zpct { font-size:15px; margin-right:10px; width:40px; }
    .wm { position:absolute; right:15px; bottom:0; color:rgba(105,105,105,.75); font-size:15.5px; white-space:nowrap; line-height:18px; }
    .strip { height:9px; background:#e4e0ee; display:flex; }
    .strip .win2 { margin-left:60px; width:360px; background:#fff; display:flex; gap:50px; padding:6px 0 0 275px; box-sizing:border-box; }
    .strip .y { width:12px; height:3px; background:#f0c040; border-radius:6px 6px 0 0; }
    .strip .g { width:4px; height:3px; background:#4caf50; }
    .strip .blk { margin-left:1309px; margin-top:7px; width:38px; height:2px; background:repeating-linear-gradient(90deg,#333 0 5px,transparent 5px 12px); }
  `;

  private pattern() {
    const bars: number[][] = [[27, 32], [36, 41], [45.500, 32], [54, 52], [63, 38], [109, 54], [138, 59]];
    const thin: number[][] = [[164.500, 57], [171, 54], [177.500, 51], [184.500, 48], [191.500, 43], [198, 39], [204.500, 33], [210.500, 15]];
    const strokeC = "#246a45";
    return html`<svg class="pattern" width="600" height="81" viewBox="0 0 600 81">
      ${bars.map(b => svg`<rect x="${b[0]}" y="0" width="${b[0] >= 100 ? 16 : 4.500}" height="${b[1]}" fill="${strokeC}"/>`)}
      ${thin.map(b => svg`<rect x="${b[0]}" y="0" width="2.400" height="${b[1]}" fill="${strokeC}"/>`)}
      <path d="M84 0c1 12 6 22 12 30V0z" fill="${strokeC}"/>
      <ellipse cx="240" cy="12" rx="17.500" ry="16" fill="${strokeC}"/>
      <circle cx="305.500" cy="38" r="22" fill="none" stroke="${strokeC}" stroke-width="9"/>
      <circle cx="305.500" cy="38" r="10" fill="${strokeC}"/>
      <circle cx="418" cy="0" r="77" fill="none" stroke="${strokeC}" stroke-width="14"/>
      ${[0, 1, 2, 3].map(i => svg`<path d="M${352 + i * 13} 0l${66 + i} 68" stroke="${strokeC}" stroke-width="5"/>`)}
      <path d="M555 0h14l-48 40-7-6zM578 0h13l-65 66-7-6zM596 0h4v8l-56 57-7-6z" fill="${strokeC}"/>
    </svg>`;
  }

  render() {
    return html`
      <div class="top">
        ${this.pattern()}
        <div class="titlebar">
          <div class="qat">${saveI}<span class="q-undo">${undoI}</span><span class="q-ch">${chev("#5f9e7f")}</span><span class="q-redo">${redoI}</span><span class="q-ch">${chev("#5f9e7f")}</span><span class="q-sort">${sortQ}</span><span class="q-drop">${qatDrop}</span></div>
          <div class="title">result1_婺源篁岭.xls  [兼容模式]  -  Excel</div>
          <div class="win"><span class="user">霍 可欣</span>${person}<span class="w-rib">${ribDisp}</span><span class="w-min">${minI}</span><span class="w-res">${restI}</span><span class="w-cls">${closeI}</span></div>
        </div>
        <div class="tabs">
          <div class="tab file">文件</div><div class="tab on">开始</div><div class="tab">插入</div><div class="tab">绘图</div><div class="tab">页面布局</div><div class="tab">公式</div><div class="tab">数据</div><div class="tab">审阅</div><div class="tab">视图</div><div class="tab">帮助</div><div class="tab">福昕PDF</div>
          <div class="tab tell">${bulb}<span>操作说明搜索</span></div>
          <span class="cmt">${comment}</span>
        </div>
      </div>

      <div class="ribbon">
        <div class="group g-clip">
          <div class="body cb">
            <div class="paste">${paste}<span class="t">粘贴</span><span class="chev">${chev()}</span></div>
            <div class="smalls">
              <div class="srow"><span class="slot">${cut}</span>剪切</div>
              <div class="srow"><span class="slot">${copy}</span>复制<span class="cc1">${chev()}</span></div>
              <div class="srow"><span class="slot">${painter}</span>格式刷</div>
            </div>
          </div>
          <div class="glabel l">剪贴板</div>${launcher}
        </div>
        <div class="sep"></div>
        <div class="group g-font">
          <div class="body pt">
            <div class="r1">
              <div class="sel f-name"><span>Arial</span>${tri}</div>
              <div class="sel f-size"><span>10</span>${tri}</div>
              <span class="f-up">${grow(true)}</span><span class="f-dn">${grow(false)}</span>
            </div>
            <div class="fr2">
              <span class="bi b">B</span><span class="bi i">I</span><span class="bi u">U</span>${chev()}<i class="vs"></i>
              ${borders}${chev()}<i class="vs"></i>${fillI}${chev()}${colorA}${chev()}<i class="vs"></i>${wen}${chev()}
            </div>
          </div>
          <div class="glabel l">字体</div>${launcher}
        </div>
        <div class="sep"></div>
        <div class="group g-align">
          <div class="body">
            <div class="ar1">
              ${L(16, 29, [[1, 15, 5], [1, 15, 10]])}
              ${L(18, 29, [[0, 18, 9], [0, 18, 14], [0, 18, 19]])}
              <div class="active">${L(14, 27, [[0, 14, 13], [0, 14, 18], [0, 14, 23]])}</div>
              <i class="vs"></i>${orient}${chev()}<span></span><i class="vs"></i><span></span>${wrap}<span class="t">自动换行</span>
            </div>
            <div class="ar2">
              ${L(14, 28, [[0, 14, 8], [0, 10, 12], [0, 14, 16], [0, 10, 20]])}
              ${L(16, 28, [[0, 16, 8], [3, 13, 12], [0, 16, 16], [3, 13, 20]])}
              ${L(14, 28, [[0, 14, 8], [4, 14, 12], [0, 14, 16], [4, 14, 20]])}
              <i class="vs"></i>${indentL}${indentR}<i class="vs"></i>${merge}<span class="t">合并后居中</span>${chev()}
            </div>
          </div>
          <div class="glabel l">对齐方式</div>${launcher}
        </div>
        <div class="sep"></div>
        <div class="group g-num">
          <div class="body pt">
            <div class="sel n-sel"><span>常规</span>${tri}</div>
            <div class="nr2">${acct}${chev()}<span class="pct">%</span><span class="cma">,</span><i class="vs"></i>${decInc}${decDec}</div>
          </div>
          <div class="glabel l">数字</div>${launcher}
        </div>
        <div class="sep"></div>
        <div class="group g-style">
          <div class="body larges s-l">
            <div class="lb w60"><div class="lic">${condI}</div><span class="t1">条件格式</span><span class="cv">${chev()}</span></div>
            <div class="lb w76"><div class="lic">${tableI}</div><span class="t1">套用</span><span class="t2">表格格式${chev()}</span></div>
            <div class="lb w75"><div class="lic">${cellStyleI}</div><span class="t1">单元格样式</span><span class="cv">${chev()}</span></div>
          </div>
          <div class="glabel">样式</div>
        </div>
        <div class="sep"></div>
        <div class="group g-cell">
          <div class="body larges c-l">
            <div class="lb w52"><div class="lic">${insI}</div><span class="t1">插入</span><span class="cv">${chev()}</span></div>
            <div class="lb w52"><div class="lic">${delI}</div><span class="t1">删除</span><span class="cv">${chev()}</span></div>
            <div class="lb w52"><div class="lic">${fmtI}</div><span class="t1">格式</span><span class="cv">${chev()}</span></div>
          </div>
          <div class="glabel">单元格</div>
        </div>
        <div class="sep"></div>
        <div class="group g-edit">
          <div class="body ed">
            <div class="eds">
              <div class="srow"><span class="slot">${sigma}</span>自动求和<span class="cc1">${chev()}</span></div>
              <div class="srow"><span class="slot">${fillDown}</span>填充<span class="cc2">${chev()}</span></div>
              <div class="srow"><span class="slot">${eraser}</span>清除<span class="cc2">${chev()}</span></div>
            </div>
            <div class="lb w80"><div class="lic">${sortI}</div><span class="t1">排序和筛选</span><span class="cv">${chev()}</span></div>
            <div class="lb w80"><div class="lic">${findI}</div><span class="t1">查找和选择</span><span class="cv">${chev()}</span></div>
          </div>
          <div class="glabel">编辑</div>
        </div>
        <div class="sep"></div>
        <div class="g-rest">${collapse}</div>
      </div>

      <div class="fbar">
        <div class="namebox"><span>A1</span>${tri}</div>
        <div class="dots"><i></i><i></i><i></i></div>
        <div class="fbtns">${xI}${checkI}<span class="fx">fx</span></div>
        <div class="finput"><span>日期</span>${triUp}</div>
      </div>

      <div class="sheet">
        <div class="grid">
          <div class="colh">
            <div class="corner"><svg width="13" height="13" viewBox="0 0 13 13"><path d="M13 0v13H0z" fill="#b4b4b4"/></svg></div>
            ${cols.map((c, i) => html`<div class="ch ${i === 0 ? "sel2" : ""}">${i < 23 ? c : ""}</div>`)}
          </div>
          <div class="row">
            <div class="rh sel2">1</div>
            <div class="c cn a1">日期<span class="handle"></span></div>
            <div class="c cn">ip属地</div><div class="c cn">评分</div><div class="c cn">评论</div>
            <div class="rest"></div>
          </div>
          ${rows.map((r, i) => html`
            <div class="row">
              <div class="rh">${i + 2}</div>
              <div class="c"></div>
              <div class="c">${r[0]}</div>
              <div class="c cn">${r[1]}</div>
              <div class="c txtnum">${r[2]}</div>
              <div class="rest"><span class="txt">${r[3]}</span></div>
            </div>`)}
        </div>
        <div class="vscroll">
          <div class="vtop">
            <div class="sb v-btn"><svg width="9" height="5" viewBox="0 0 9 5"><path d="M0 5l4.500-5L9 5z" fill="#333"/></svg></div>
            <div class="sb v-thumb"></div>
          </div>
          <div class="sb v-btn"><svg width="9" height="5" viewBox="0 0 9 5"><path d="M0 0l4.500 5L9 0z" fill="#333"/></svg></div>
        </div>
      </div>

      <div class="tabbar">
        <div class="nav">
          <svg width="6" height="10" viewBox="0 0 6 10"><path d="M6 0v10L0 5z" fill="#c6c6c6"/></svg>
          <svg width="6" height="10" viewBox="0 0 6 10"><path d="M0 0v10l6-5z" fill="#c6c6c6"/></svg>
        </div>
        <div class="sheet1">sheet1</div>
        <svg class="addb" viewBox="0 0 20 20"><circle cx="10" cy="10" r="9" fill="none" stroke="#888" stroke-width="1.300"/><path d="M5 10h10M10 5v10" stroke="#777" stroke-width="1.500"/></svg>
        <div class="vdots"><i></i><i></i><i></i></div>
        <div class="hs">
          <div class="sb h-btn"><svg width="5" height="9" viewBox="0 0 5 9"><path d="M5 0v9L0 4.500z" fill="#333"/></svg></div>
          <div class="sb h-th"></div>
          <div class="h-tr"></div>
          <div class="sb h-btn"><svg width="5" height="9" viewBox="0 0 5 9"><path d="M0 0v9l5-4.500z" fill="#333"/></svg></div>
        </div>
      </div>

      <div class="status">
        <span>就绪</span>
        <svg class="ic acc" width="19" height="20" viewBox="0 0 19 20"><path d="M5 1a8 8 0 0 0-3 14" fill="none" stroke="#444" stroke-width="1.200"/><path d="M8 7h7a3 3 0 0 1 0 7H9M9 14v3" fill="none" stroke="#444" stroke-width="1.500"/><path d="M3 17h1M7 19h1" stroke="#444" stroke-width="1.500"/></svg>
        <span>辅助功能: 不可用</span>
        <div class="st-r">
          <div class="vbtn on"><svg class="ic" width="17" height="17" viewBox="0 0 17 17"><path d="M.5.500h16v16H.5zM.5 5.500h16M.5 11.500h16M5.500.5v16M11.500.5v16" fill="none" stroke="#666"/></svg></div>
          <div class="vbtn"><svg class="ic" width="17" height="17" viewBox="0 0 17 17"><path d="M.5.500h16v16H.5z" fill="none" stroke="#666"/><path d="M4.500 3.500h8v10h-8zM6 6.500h5M6 9h5M6 11.500h5" fill="none" stroke="#666"/></svg></div>
          <div class="vbtn"><svg class="ic" width="17" height="17" viewBox="0 0 17 17"><path d="M.5.500h16v16H.5zM.5 10.500h16M6 .5v8h5v-8" fill="none" stroke="#666"/></svg></div>
          <i class="zoomm"></i>
          <div class="zline"><i class="zh"></i></div>
          <span class="zplus">+</span>
          <span class="zpct">100%</span>
        </div>
        <div class="wm">CSDN @甲乙410</div>
      </div>
      <div class="strip"><div class="win2"><i class="y"></i><i class="g"></i></div><i class="blk"></i></div>
    `;
  }
}
